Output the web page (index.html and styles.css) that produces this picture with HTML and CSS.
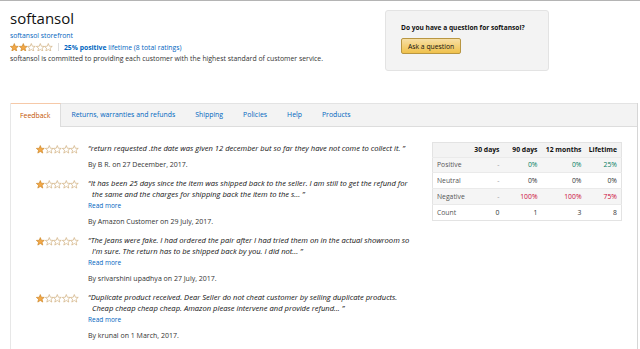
FILE: index.html
```html
<!DOCTYPE html>
<html>
<head>
<meta charset="utf-8">
<link rel="stylesheet" href="styles.css">
</head>
<body>
<svg width="0" height="0" class="defs">
  <defs>
    <path id="star" d="M5 0.6 L6.25 3.75 L9.6 3.95 L7.05 6.1 L7.9 9.4 L5 7.55 L2.1 9.4 L2.95 6.1 L0.4 3.95 L3.75 3.75 Z"/>
  </defs>
</svg>
<div class="top">
  <div class="info">
    <h1 class="title">softansol</h1>
    <a class="link store">softansol storefront</a>
    <div class="rating">
      <span class="stars">
        <svg class="star full" viewBox="0 0 10 10"><use href="#star"/></svg><svg class="star full" viewBox="0 0 10 10"><use href="#star"/></svg><svg class="star" viewBox="0 0 10 10"><use href="#star"/></svg><svg class="star" viewBox="0 0 10 10"><use href="#star"/></svg><svg class="star" viewBox="0 0 10 10"><use href="#star"/></svg>
      </span>
      <span class="sep"></span>
      <a class="link"><b>25% positive</b> lifetime (8 total ratings)</a>
    </div>
    <p class="desc">softansol is committed to providing each customer with the highest standard of customer service.</p>
  </div>
  <div class="qbox">
    <div class="qtitle">Do you have a question for softansol?</div>
    <button class="askbtn">Ask a question</button>
  </div>
</div>

<div class="panel">
  <div class="tabs">
    <span class="tab active">Feedback</span>
    <span class="tab">Returns, warranties and refunds</span>
    <span class="tab">Shipping</span>
    <span class="tab">Policies</span>
    <span class="tab">Help</span>
    <span class="tab">Products</span>
  </div>
  <div class="content">
    <div class="reviews">
      <div class="review">
        <span class="stars small"><svg class="star full" viewBox="0 0 10 10"><use href="#star"/></svg><svg class="star" viewBox="0 0 10 10"><use href="#star"/></svg><svg class="star" viewBox="0 0 10 10"><use href="#star"/></svg><svg class="star" viewBox="0 0 10 10"><use href="#star"/></svg><svg class="star" viewBox="0 0 10 10"><use href="#star"/></svg></span>
        <div class="rbody">
          <div class="quote">“return requested .the date was given 12 december but so far they have not come to collect it. ”</div>
          <div class="by">By B R. on 27 December, 2017.</div>
        </div>
      </div>
      <div class="review">
        <span class="stars small"><svg class="star full" viewBox="0 0 10 10"><use href="#star"/></svg><svg class="star" viewBox="0 0 10 10"><use href="#star"/></svg><svg class="star" viewBox="0 0 10 10"><use href="#star"/></svg><svg class="star" viewBox="0 0 10 10"><use href="#star"/></svg><svg class="star" viewBox="0 0 10 10"><use href="#star"/></svg></span>
        <div class="rbody">
          <div class="quote">“It has been 25 days since the item was shipped back to the seller. I am still to get the refund for the same and the charges for shipping back the item to the s... ”</div>
          <a class="link more">Read more</a>
          <div class="by">By Amazon Customer on 29 July, 2017.</div>
        </div>
      </div>
      <div class="review">
        <span class="stars small"><svg class="star full" viewBox="0 0 10 10"><use href="#star"/></svg><svg class="star" viewBox="0 0 10 10"><use href="#star"/></svg><svg class="star" viewBox="0 0 10 10"><use href="#star"/></svg><svg class="star" viewBox="0 0 10 10"><use href="#star"/></svg><svg class="star" viewBox="0 0 10 10"><use href="#star"/></svg></span>
        <div class="rbody">
          <div class="quote">“The Jeans were fake. I had ordered the pair after I had tried them on in the actual showroom so I'm sure. The return has to be shipped back by you. I did not... ”</div>
          <a class="link more">Read more</a>
          <div class="by">By srivarshini upadhya on 27 July, 2017.</div>
        </div>
      </div>
      <div class="review">
        <span class="stars small"><svg class="star full" viewBox="0 0 10 10"><use href="#star"/></svg><svg class="star" viewBox="0 0 10 10"><use href="#star"/></svg><svg class="star" viewBox="0 0 10 10"><use href="#star"/></svg><svg class="star" viewBox="0 0 10 10"><use href="#star"/></svg><svg class="star" viewBox="0 0 10 10"><use href="#star"/></svg></span>
        <div class="rbody">
          <div class="quote">“Duplicate product received. Dear Seller do not cheat customer by selling duplicate products. Cheap cheap cheap cheap. Amazon please intervene and provide refund... ”</div>
          <a class="link more">Read more</a>
          <div class="by">By krunal on 1 March, 2017.</div>
        </div>
      </div>
    </div>
    <table class="stats">
      <thead>
        <tr><th></th><th>30 days</th><th>90 days</th><th>12 months</th><th>Lifetime</th></tr>
      </thead>
      <tbody>
        <tr class="shade"><td>Positive</td><td class="dash">-</td><td class="pos">0%</td><td class="pos">0%</td><td class="pos">25%</td></tr>
        <tr><td>Neutral</td><td class="dash">-</td><td>0%</td><td>0%</td><td>0%</td></tr>
        <tr class="shade"><td>Negative</td><td class="dash">-</td><td class="neg">100%</td><td class="neg">100%</td><td class="neg">75%</td></tr>
        <tr><td>Count</td><td>0</td><td>1</td><td>3</td><td>8</td></tr>
      </tbody>
    </table>
  </div>
</div>
</body>
</html>
```

FILE: styles.css
```css
html, body {
  margin: 0;
  padding: 0;
  background: #fff;
}
body {
  border-top: 1px solid #b4b4b4;
  font-family: "Open Sans", "Noto Sans", sans-serif;
  font-size: 7px;
  color: #111;
  height: 348px;
  overflow: hidden;
}
.defs { position: absolute; }

.top {
  display: flex;
  padding: 0 0 0 10px;
  height: 102px;
}
.info { width: 375px; }
.title {
  margin: 7px 0 0 0;
  font-size: 15px;
  font-weight: 400;
  line-height: 20px;
  color: #111;
}
.link { color: #0066c0; text-decoration: none; }
.store { display: block; margin-top: 3px; line-height: 10px; font-size: 6.8px; }
.rating {
  display: flex;
  align-items: center;
  height: 12px;
  font-size: 6.8px;
}
.stars { display: inline-flex; }
.star {
  width: 8.6px;
  height: 8.6px;
  fill: #fff;
  stroke: #c9a46a;
  stroke-width: 0.7;
}
.star.full { fill: #f3a847; stroke: #c87e1a; }
.sep {
  width: 1px;
  height: 8px;
  background: #ddd;
  margin: 0 5px 0 5px;
}
.rating b { font-weight: 700; }
.desc { margin: 0; line-height: 12px; color: #333; font-size: 6.9px; }

.qbox {
  margin-top: 9px;
  width: 164px;
  height: 61px;
  box-sizing: border-box;
  background: #f3f3f3;
  border: 1px solid #e3e3e3;
  border-radius: 3px;
  padding: 12px 0 0 15px;
}
.qtitle { font-weight: 700; font-size: 6.6px; line-height: 10px; color: #111; }
.askbtn {
  margin-top: 5px;
  font-family: inherit;
  font-size: 6.8px;
  color: #111;
  height: 16px;
  padding: 0 6px;
  border: 1px solid #b89642;
  border-radius: 2px;
  background: linear-gradient(#f7dfa5, #f0c14b);
}

.panel {
  margin-left: 10px;
  width: 628px;
  height: 247px;
  box-sizing: border-box;
  border-left: 1px solid #e7e7e7;
  border-right: 1px solid #d6d6d6;
}
.tabs {
  display: flex;
  height: 24px;
  box-sizing: border-box;
  background: #f3f3f3;
  border-top: 1px solid #e3e3e3;
  border-bottom: 1px solid #ddd;
}
.tab {
  padding: 0 10px;
  line-height: 22px;
  color: #0066c0;
  font-size: 6.9px;
}
.tab.active {
  background: #fff;
  color: #c45500;
  border-top: 1px solid #f6c9a8;
  margin-top: -1px;
  margin-bottom: -1px;
  line-height: 24px;
  padding: 0 10px 0 9px;
  border-right: 1px solid #ddd;
}

.content {
  display: flex;
  padding: 16px 0 0 25px;
}
.reviews { width: 396px; flex-shrink: 0; }
.review {
  display: flex;
  margin-bottom: 8px;
}
.stars.small { width: 52px; padding-top: 2px; align-self: flex-start; }
.rbody { width: 332px; }
.quote {
  font-style: italic;
  font-size: 7.6px;
  line-height: 11px;
  padding-left: 4px;
  text-indent: -4px;
  color: #111;
}
.more { display: block; line-height: 11px; font-size: 6.5px; }
.by { margin-top: 5px; line-height: 11px; color: #333; }

.stats {
  margin-top: -1px;
  align-self: flex-start;
  flex-shrink: 0;
  table-layout: fixed;
  width: 189px;
  border-collapse: collapse;
  border: 1px solid #e3e3e3;
  font-size: 6.8px;
}
.stats th, .stats td { box-sizing: border-box; }
.stats th {
  background: #f3f3f3;
  font-weight: 700;
  text-align: right;
  height: 14.5px;
  padding: 0 4px 0 0;
}
.stats td {
  height: 15.8px;
  text-align: right;
  padding: 0 4px 0 0;
  color: #333;
  border-top: 1px solid #eaeaea;
}
.stats td:first-child { text-align: left; padding-left: 4px; color: #555; }
.stats th:nth-child(1) { width: 36px; }
.stats th:nth-child(2) { width: 35px; }
.stats th:nth-child(3) { width: 38px; }
.stats th:nth-child(4) { width: 44px; }
.stats th:nth-child(5) { width: 36px; }
.stats tr.shade td { background: #f5f5f5; }
.stats .dash { color: #999; }
.stats .pos { color: #067d62; }
.stats .neg { color: #cc0c39; }
```
